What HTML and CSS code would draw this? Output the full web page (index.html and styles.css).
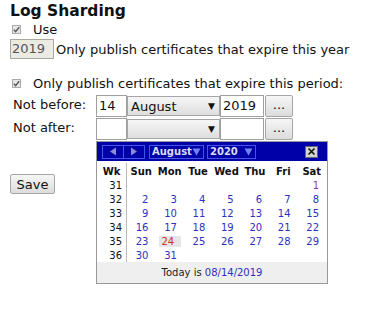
FILE: index.html
```html
<!DOCTYPE html>
<html>
<head>
<meta charset="utf-8">
<link rel="stylesheet" href="styles.css">
</head>
<body>
<div class="page">
  <div class="title">Log Sharding</div>
  <div class="row use-row">
    <span class="cb"><svg width="9" height="9" viewBox="0 0 9 9"><path d="M1.8 4.6 L3.6 6.6 L7.2 2.2" fill="none" stroke="#555" stroke-width="1.4"/></svg></span>
    <span class="lbl">Use</span>
  </div>
  <div class="row year-row">
    <span class="year-input">2019</span>
    <span class="txt">Only publish certificates that expire this year</span>
  </div>
  <div class="row period-row">
    <span class="cb"><svg width="9" height="9" viewBox="0 0 9 9"><path d="M1.8 4.6 L3.6 6.6 L7.2 2.2" fill="none" stroke="#555" stroke-width="1.4"/></svg></span>
    <span class="lbl">Only publish certificates that expire this period:</span>
  </div>
  <div class="form-grid">
    <div class="flabel">Not before:</div>
    <div class="fields">
      <span class="inp day">14</span>
      <span class="sel"><span class="sel-text">August</span><span class="sel-arrow">▼</span></span>
      <span class="inp yr">2019</span>
      <span class="btn dots">...</span>
    </div>
    <div class="flabel">Not after:</div>
    <div class="fields">
      <span class="inp day"></span>
      <span class="sel"><span class="sel-text"></span><span class="sel-arrow">▼</span></span>
      <span class="inp yr"></span>
      <span class="btn dots">...</span>
    </div>
  </div>
  <div class="save-wrap"><span class="btn save">Save</span></div>

  <div class="cal">
    <div class="cal-head">
      <span class="nav">
        <span class="nav-btn"><svg width="8" height="9" viewBox="0 0 8 9"><path d="M7 0.5 L1 4.5 L7 8.5 Z" fill="#8a8ad8"/></svg></span>
        <span class="nav-btn"><svg width="8" height="9" viewBox="0 0 8 9"><path d="M1 0.5 L7 4.5 L1 8.5 Z" fill="#8a8ad8"/></svg></span>
      </span>
      <span class="hsel month"><span>August</span><svg width="9" height="8" viewBox="0 0 9 8"><path d="M0.5 0.5 L8.5 0.5 L4.5 7.5 Z" fill="#6f86f0"/></svg></span>
      <span class="hsel year"><span>2020</span><svg width="9" height="8" viewBox="0 0 9 8"><path d="M0.5 0.5 L8.5 0.5 L4.5 7.5 Z" fill="#6f86f0"/></svg></span>
      <span class="close"><svg width="9" height="9" viewBox="0 0 9 9"><path d="M1.5 1.5 L7.5 7.5 M7.5 1.5 L1.5 7.5" stroke="#111" stroke-width="1.6"/></svg></span>
    </div>
    <table class="cal-table">
      <thead>
        <tr><th class="wk">Wk</th><th>Sun</th><th>Mon</th><th>Tue</th><th>Wed</th><th>Thu</th><th>Fri</th><th>Sat</th></tr>
      </thead>
      <tbody>
        <tr><td class="wk">31</td><td></td><td></td><td></td><td></td><td></td><td></td><td class="first">1</td></tr>
        <tr><td class="wk">32</td><td>2</td><td>3</td><td>4</td><td>5</td><td>6</td><td>7</td><td>8</td></tr>
        <tr><td class="wk">33</td><td>9</td><td>10</td><td>11</td><td>12</td><td>13</td><td>14</td><td>15</td></tr>
        <tr><td class="wk">34</td><td>16</td><td>17</td><td>18</td><td>19</td><td>20</td><td>21</td><td>22</td></tr>
        <tr><td class="wk">35</td><td>23</td><td><span class="today">24</span></td><td>25</td><td>26</td><td>27</td><td>28</td><td>29</td></tr>
        <tr><td class="wk">36</td><td>30</td><td>31</td><td></td><td></td><td></td><td></td><td></td></tr>
      </tbody>
    </table>
    <div class="cal-foot">Today is <span class="tdate">08/14/2019</span></div>
  </div>
</div>
</body>
</html>
```

FILE: styles.css
```css
html, body {
  margin: 0;
  padding: 0;
  background: #fff;
}
body {
  font-family: "DejaVu Sans", Verdana, sans-serif;
  font-size: 13px;
  color: #111;
}
.page {
  position: relative;
  width: 384px;
  height: 313px;
  padding-left: 10px;
  box-sizing: border-box;
}
.title {
  font-weight: bold;
  font-size: 15.5px;
  line-height: 20px;
  height: 20px;
  padding-top: 1px;
}
.row {
  display: flex;
  align-items: center;
}
.use-row {
  height: 14px;
  margin-top: 1px;
}
.cb {
  display: inline-block;
  width: 9px;
  height: 9px;
  margin-left: 2px;
  border: 1px solid #aaa;
  background: #e6e6e6;
  box-sizing: border-box;
  position: relative;
}
.cb svg {
  position: absolute;
  left: -1px;
  top: -1px;
}
.lbl {
  margin-left: 12px;
}
.year-row {
  height: 20px;
  margin-top: 3px;
}
.year-input {
  display: inline-block;
  width: 44px;
  height: 20px;
  box-sizing: border-box;
  border: 1px solid #a8a8a0;
  background: #ebebe4;
  color: #555;
  padding-left: 1px;
  line-height: 18px;
}
.txt {
  margin-left: 2px;
}
.period-row {
  height: 14px;
  margin-top: 17px;
}
.form-grid {
  display: grid;
  grid-template-columns: 86px auto;
  grid-auto-rows: 23px;
  margin-top: 5px;
}
.flabel {
  padding-left: 3px;
  line-height: 20px;
}
.fields {
  display: flex;
  height: 22px;
}
.inp {
  display: inline-block;
  height: 22px;
  box-sizing: border-box;
  border: 1px solid #a0a0a0;
  background: #fff;
  line-height: 20px;
  padding-left: 2px;
}
.inp.day { width: 31px; }
.inp.yr { width: 44px; }
.sel {
  display: inline-flex;
  align-items: center;
  justify-content: space-between;
  width: 93px;
  height: 20px;
  margin-top: 1px;
  box-sizing: border-box;
  border: 1px solid #a6a6a6;
  background: linear-gradient(#f6f6f6, #dedede);
  padding: 0 4px 0 3px;
}
.sel-arrow {
  font-size: 9px;
  color: #111;
}
.btn {
  display: inline-flex;
  align-items: center;
  justify-content: center;
  box-sizing: border-box;
  border: 1px solid #a6a6a6;
  border-radius: 2px;
  background: linear-gradient(#f6f6f6, #dcdcdc);
}
.dots {
  width: 28px;
  height: 22px;
  margin-left: 1px;
  padding-bottom: 3px;
}
.save-wrap {
  margin-top: 33px;
}
.save {
  width: 45px;
  height: 20px;
}

/* calendar */
.cal {
  position: absolute;
  left: 96px;
  top: 141px;
  width: 232px;
  height: 143px;
  box-sizing: border-box;
  border: 1px solid #999;
  background: #fff;
  font-size: 10px;
}
.cal-head {
  background: #0000a8;
  height: 19px;
  display: flex;
  align-items: center;
  padding-left: 5px;
  padding-right: 9px;
  box-sizing: border-box;
}
.nav {
  display: flex;
  height: 14px;
  border: 1px solid #3d55e8;
  box-sizing: border-box;
}
.nav-btn {
  width: 20px;
  display: flex;
  align-items: center;
  justify-content: center;
}
.nav-btn + .nav-btn {
  border-left: 1px solid #3d55e8;
}
.hsel {
  display: flex;
  align-items: center;
  justify-content: space-between;
  white-space: nowrap;
  height: 14px;
  box-sizing: border-box;
  border: 1px solid #3d55e8;
  color: #dcdcf0;
  font-weight: bold;
  font-size: 10px;
  padding: 0 2px 0 2px;
  margin-left: 4px;
}
.hsel.month { width: 55px; }
.hsel.year { width: 49px; margin-left: 3px; }
.close {
  margin-left: auto;
  width: 13px;
  height: 12px;
  box-sizing: border-box;
  border: 1px solid #666;
  background: #d4d4d4;
  display: flex;
  align-items: center;
  justify-content: center;
}
.cal-table {
  border-collapse: collapse;
  margin-top: 2px;
  table-layout: fixed;
  width: 229px;
}
.cal-table th {
  height: 16px;
  padding: 0;
  font-weight: bold;
  color: #111;
  text-align: center;
  width: 28.4px;
}
.cal-table th.wk {
  width: 29px;
}
.cal-table td {
  height: 14px;
  padding: 0 7px 0 0;
  text-align: right;
  color: #3030c0;
  line-height: 14px;
}
.cal-table .wk {
  border-right: 1px solid #bbb;
  color: #111;
  padding-right: 4px;
}
.cal-table th.wk {
  padding-right: 0;
}
.cal-table td.first {
  color: #8a3aa8;
}
.today {
  display: inline-block;
  background: #e6e6e6;
  color: #d03020;
  width: 18px;
  margin-right: -4px;
  padding-right: 4px;
  box-sizing: content-box;
  text-align: center;
  line-height: 11px;
}
.cal-foot {
  position: absolute;
  left: 0;
  right: 0;
  bottom: 0;
  height: 21px;
  background: #efefef;
  text-align: center;
  line-height: 21px;
  color: #222;
}
.tdate {
  color: #3030c0;
}
```
